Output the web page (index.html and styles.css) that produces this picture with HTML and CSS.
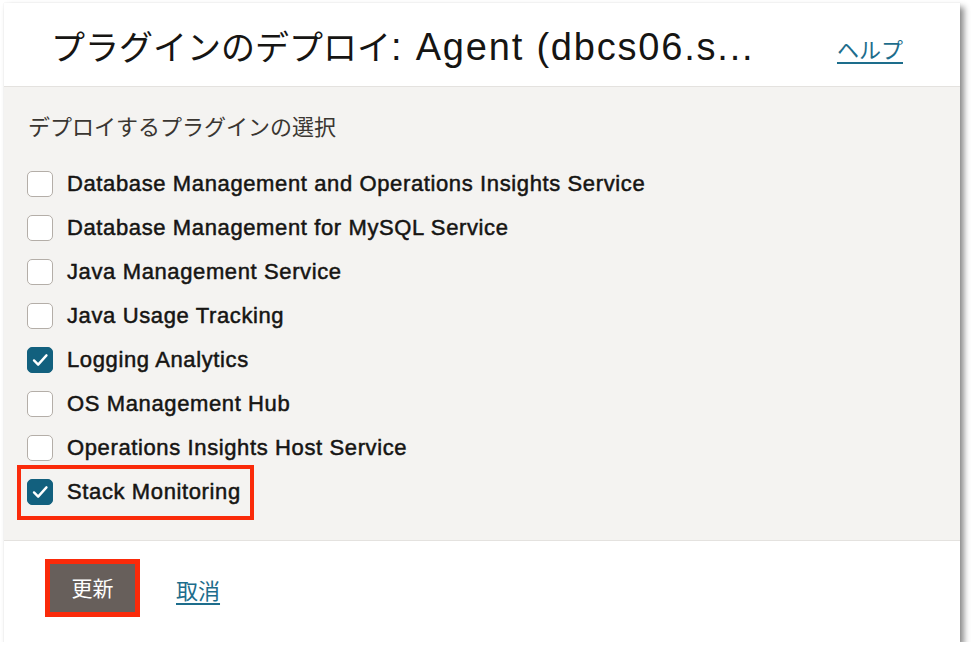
FILE: index.html
```html
<!DOCTYPE html>
<html lang="ja">
<head>
<meta charset="utf-8">
<title>プラグインのデプロイ</title>
<link rel="stylesheet" href="styles.css">
</head>
<body>
<div class="panel">
  <header class="head">
    <h1 class="title">プラグインのデプロイ<span class="title-latin">: Agent (dbcs06.s...</span></h1>
    <a class="help link" href="#">ヘルプ</a>
  </header>
  <section class="body">
    <div class="group-label">デプロイするプラグインの選択</div>
    <ul class="list">
      <li class="row"><span class="cb"></span><span class="txt">Database Management and Operations Insights Service</span></li>
      <li class="row"><span class="cb"></span><span class="txt">Database Management for MySQL Service</span></li>
      <li class="row"><span class="cb"></span><span class="txt">Java Management Service</span></li>
      <li class="row"><span class="cb"></span><span class="txt">Java Usage Tracking</span></li>
      <li class="row"><span class="cb checked"><svg viewBox="0 0 26 26"><path d="M6.5 13.5l4.5 4.5 9-10" /></svg></span><span class="txt">Logging Analytics</span></li>
      <li class="row"><span class="cb"></span><span class="txt">OS Management Hub</span></li>
      <li class="row"><span class="cb"></span><span class="txt">Operations Insights Host Service</span></li>
      <li class="row hl"><span class="cb checked"><svg viewBox="0 0 26 26"><path d="M6.5 13.5l4.5 4.5 9-10" /></svg></span><span class="txt">Stack Monitoring</span></li>
    </ul>
  </section>
  <footer class="foot">
    <span class="hl-btn"><button class="btn" type="button">更新</button></span>
    <a class="cancel link" href="#">取消</a>
  </footer>
</div>
</body>
</html>
```

FILE: styles.css
```css
html, body {
  margin: 0;
  padding: 0;
  background: #ffffff;
}

body {
  font-family: "Liberation Sans", "Noto Sans CJK JP", sans-serif;
  color: #161513;
}

.panel {
  margin: 3px 0 0 4px;
  width: 956px;
  height: 639px;
  background: #ffffff;
  box-shadow: 4px 4px 6px rgba(0, 0, 0, 0.45), 0 0 1px rgba(0, 0, 0, 0.12);
  display: flex;
  flex-direction: column;
}

.head {
  height: 83px;
  border-bottom: 1px solid #e4e2df;
  display: flex;
  align-items: center;
  padding: 0 57px 0 47px;
}

.title {
  margin: 0;
  font-size: 34px;
  font-weight: 400;
  color: #161513;
  white-space: nowrap;
  padding-top: 2px;
}

.title-latin {
  font-size: 38px;
  letter-spacing: 1.8px;
}

.link {
  color: #1d6d8c;
  text-decoration: underline;
  text-underline-offset: 4px;
  text-decoration-thickness: 1.5px;
}

.help {
  margin-left: auto;
  font-size: 22px;
  padding-top: 6px;
}

.body {
  background: #f4f3f1;
  padding: 26px 0 26px 19px;
  height: 401px;
}

.group-label {
  font-size: 22px;
  line-height: 30px;
  color: #3a3631;
  margin-left: 5px;
}

.list {
  list-style: none;
  margin: 19px 0 0 0;
  padding: 0;
}

.row {
  display: flex;
  align-items: center;
  height: 44px;
  padding-left: 4px;
}

.row.hl {
  width: fit-content;
  border: 4px solid #fa2a0a;
  padding: 1px 9px 2px 6px;
  margin: -5px 0 -6px -6px;
}

.cb {
  width: 24px;
  height: 24px;
  border: 1px solid #b4aea8;
  border-radius: 5px;
  background: #ffffff;
  box-sizing: content-box;
  display: flex;
  align-items: center;
  justify-content: center;
  flex: none;
}

.cb.checked {
  background: #12607e;
  border-color: #12607e;
}

.cb svg {
  width: 26px;
  height: 26px;
  fill: none;
  stroke: #ffffff;
  stroke-width: 2.6;
  stroke-linecap: round;
  stroke-linejoin: round;
}

.txt {
  margin-left: 14px;
  font-size: 22px;
  letter-spacing: 0.62px;
  font-weight: 400;
  color: #161513;
  -webkit-text-stroke: 0.5px #161513;
  padding-bottom: 1px;
}

.foot {
  flex: 1;
  border-top: 1px solid #e4e2df;
  display: flex;
  align-items: flex-start;
  padding: 18px 0 0 41px;
}

.hl-btn {
  display: inline-flex;
  border: 5px solid #fa2a0a;
}

.btn {
  width: 85px;
  height: 48px;
  border: none;
  margin: 0;
  background: #675f5b;
  color: #ffffff;
  font-family: "Liberation Sans", "Noto Sans CJK JP", sans-serif;
  font-size: 21px;
  padding: 0 0 2px 0;
}

.cancel {
  margin-left: 36px;
  margin-top: 14px;
  font-size: 22px;
}
```
